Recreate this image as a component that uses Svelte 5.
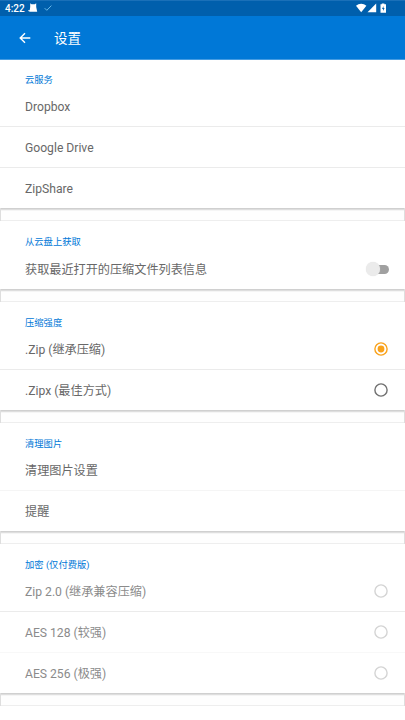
<script>
  const sections = [
    { title: '云服务', height: 148, rows: [{ text: 'Dropbox' }, { text: 'Google Drive' }, { text: 'ZipShare' }] },
    { title: '从云盘上获取', height: 68, rows: [{ text: '获取最近打开的压缩文件列表信息', control: 'switch' }] },
    { title: '压缩强度', height: 108, rows: [{ text: '.Zip (继承压缩)', control: 'checked' }, { text: '.Zipx (最佳方式)', control: 'radio' }] },
    { title: '清理图片', height: 108, faint: true, rows: [{ text: '清理图片设置' }, { text: '提醒' }] },
    { title: '加密 (仅付费版)', height: 149, disabled: true, rows: [{ text: 'Zip 2.0 (继承兼容压缩)', control: 'radio' }, { text: 'AES 128 (较强)', control: 'radio' }, { text: 'AES 256 (极强)', control: 'radio' }] }
  ];
</script>

<div class="screen">
  <div class="status">
    <span class="time">4:22</span>
    <svg class="cat" width="10" height="10" viewBox="0 0 10 10"><path d="M2.200 .3 3.500 1.300H6.800L8.200 .3V4L9.200 8.800H2L.3 8 .5 7 1.700 7.300 2.200 4Z" fill="#fff" /></svg>
    <svg class="tick" width="8" height="8" viewBox="0 0 8 8"><path d="M.7 4.200 2.800 6.300 7.400 1.600" fill="none" stroke="#69b9e8" stroke-width="1" /></svg>
    <svg class="signals" width="32" height="11" viewBox="0 0 32 11">
      <path d="M0 2.800C3-.1 7.400-.1 10.400 2.800L5.200 9.200Z" fill="#fff" />
      <path d="M20.200.500V9.200H11.500Z" fill="#fff" />
      <path d="M25.800.500H28.400V1.300H30V9.800H24.500V1.300H25.800Z" fill="#fff" />
      <path d="M27.500 3 26 6H27V8L28.600 5H27.500Z" fill="#0062b0" />
    </svg>
  </div>
  <header>
    <svg width="12" height="12" viewBox="0 0 12 12"><path d="M11.300 6H1.500M6 1.200 1.200 6 6 10.800" fill="none" stroke="#fff" stroke-width="1.400" /></svg>
    <h1>设置</h1>
  </header>
  <main>
    {#each sections as section}
      <section class:disabled={section.disabled} class:faint={section.faint} style:height="{section.height}px">
        <h2>{section.title}</h2>
        {#each section.rows as row}
          <div class="row">
            <span>{row.text}</span>
            {#if row.control === 'switch'}
              <i class="switch"></i>
            {:else if row.control}
              <svg class="radio" class:checked={row.control === 'checked'} width="14" height="14" viewBox="0 0 14 14">
                <circle class="ring" cx="7" cy="7" r="6.100" />
                {#if row.control === 'checked'}<circle class="dot" cx="7" cy="7" r="3.400" />{/if}
              </svg>
            {/if}
          </div>
        {/each}
      </section>
      <div class="gap"></div>
    {/each}
  </main>
</div>

<style>
  :global(body) { margin: 0; background: #fff; }
  .screen {
    width: 405px; height: 720px; overflow: hidden; background: #fff;
    font-family: Roboto, "Noto Sans CJK SC", sans-serif;
  }
  .status {
    height: 16px; box-sizing: border-box; padding-left: 5px;
    display: flex; align-items: center; color: #fff;
    background: linear-gradient(#1a70b8 0 1px, #005fac 1px);
  }
  .time { width: 23px; padding-top: 1px; font-size: 10px; font-weight: 500; line-height: 15px; white-space: nowrap; }
  .tick { margin-left: 6px; }
  .signals { margin-left: 304px; flex: none; }
  header {
    height: 44px; box-sizing: border-box; padding-left: 19px;
    display: flex; align-items: center; background: linear-gradient(#0078d7 0 43px, #459ce2 43px);
  }
  h1 { margin: 1px 0 0 23px; font-size: 13.500px; line-height: 21px; font-weight: 400; color: #fff; }
  section { display: flex; flex-direction: column; background: #fff; }
  h2 {
    flex: 1 1 0; min-height: 0; margin: 0; padding: 13px 0 0 25px;
    box-sizing: border-box; overflow: visible; white-space: nowrap;
    font-size: 9.300px; line-height: 15px; font-weight: 400; color: #0078d7;
  }
  section:first-child h2 { padding-top: 12px; }
  .row {
    flex: none; height: 41px; box-sizing: border-box; padding: 0 17px 0 25px;
    display: flex; align-items: center; justify-content: space-between;
    font-size: 12.150px; line-height: 20px; color: #686868;
    border-top: 1px solid transparent;
  }
  .row span { padding-top: 1px; }
  .row + .row { border-top-color: #ebebeb; }
  .faint .row + .row { border-top-color: #f5f5f5; }
  .disabled .row { color: #8b8b8b; }
  .disabled .row:last-child { border-top-color: #f8f8f8; }
  .gap {
    height: 13px; box-sizing: border-box;
    border-left: 1px solid #dedede; border-right: 1px solid #dedede;
    background: linear-gradient(#d0d0d0 0 1px, #dedede 1px 2px, #f5f5f5 2px 3px, #fefefe 3px 12px, #eee 12px);
  }
  .radio { flex: none; }
  .ring { fill: none; stroke: #707070; stroke-width: 1.400; }
  .checked .ring { stroke: #f9a21b; }
  .dot { fill: #f9a21b; }
  .disabled .ring { stroke: #d4d4d4; }
  .switch {
    width: 19px; height: 9px; margin-right: -1px; border-radius: 5px; background: #a0a0a0;
    display: flex; align-items: center;
  }
  .switch::before {
    content: ""; flex: none; width: 14px; height: 14px; margin-left: -4px;
    border-radius: 50%; background: #ebebeb; box-shadow: 0 0 1px #ddd;
  }
</style>
